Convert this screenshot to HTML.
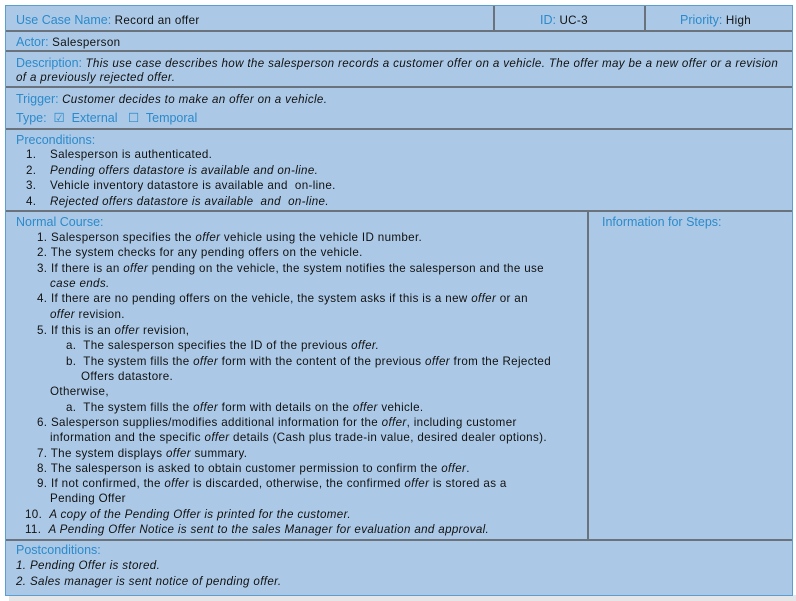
<!DOCTYPE html>
<html><head><meta charset="utf-8"><style>
*{margin:0;padding:0;box-sizing:border-box}
body{width:796px;height:601px;background:#fff;position:relative;overflow:hidden;font-family:"Liberation Sans",sans-serif}
.shadow{position:absolute;left:9px;top:595px;width:787px;height:6px;background:#e4e6e8}
.box{position:absolute;left:5px;top:5px;width:788px;height:591px;background:#abc9e6;border:1px solid #5a9fd0}
.h{position:absolute;height:2px;background:#6a737c}
.v{position:absolute;width:2px;background:#6a737c}
.t{position:absolute;white-space:nowrap;font-size:11.6px;letter-spacing:0.35px;color:#111;line-height:14px}
.l{color:#2b8acb;font-size:12.5px;font-style:normal;letter-spacing:0}
i{font-style:italic}
</style></head><body>
<div class="shadow"></div>
<div class="box"></div>
<div class="h" style="left:6px;top:30px;width:786px"></div>
<div class="v" style="left:493px;top:6px;height:25px"></div>
<div class="v" style="left:644px;top:6px;height:25px"></div>
<div class="h" style="left:6px;top:50px;width:786px"></div>
<div class="h" style="left:6px;top:86px;width:786px"></div>
<div class="h" style="left:6px;top:128px;width:786px"></div>
<div class="h" style="left:6px;top:210px;width:786px"></div>
<div class="v" style="left:587px;top:211px;height:329px"></div>
<div class="h" style="left:6px;top:539px;width:786px"></div>

<div class="t" style="left:16px;top:13px"><span class="l">Use Case Name: </span>Record an offer</div>
<div class="t" style="left:540px;top:13px"><span class="l">ID: </span>UC-3</div>
<div class="t" style="left:680px;top:13px"><span class="l">Priority: </span>High</div>
<div class="t" style="left:16px;top:35px"><span class="l">Actor: </span>Salesperson</div>
<div class="t" style="left:16px;top:56px"><span class="l">Description: </span><i>This use case describes how the salesperson records a customer offer on a vehicle. The offer may be a new offer or a revision</i></div>
<div class="t" style="left:16px;top:71px"><i>of a previously rejected offer.</i></div>
<div class="t" style="left:16px;top:92px"><span class="l">Trigger: </span><i>Customer decides to make an offer on a vehicle.</i></div>
<div class="t" style="left:16px;top:111px"><span class="l">Type:&nbsp; ☑&nbsp; External&nbsp;&nbsp; ☐&nbsp; Temporal</span></div>
<div class="t" style="left:16px;top:133px"><span class="l">Preconditions:</span></div>
<div class="t" style="left:26px;top:148px">1.</div><div class="t" style="left:50px;top:148px">Salesperson is authenticated.</div>
<div class="t" style="left:26px;top:164px">2.</div><div class="t" style="left:50px;top:164px"><i>Pending offers datastore is available and on-line.</i></div>
<div class="t" style="left:26px;top:179px">3.</div><div class="t" style="left:50px;top:179px">Vehicle inventory datastore is available and&nbsp; on-line.</div>
<div class="t" style="left:26px;top:195px">4.</div><div class="t" style="left:50px;top:195px"><i>Rejected offers datastore is available&nbsp; and&nbsp; on-line.</i></div>

<div class="t" style="left:16px;top:215px"><span class="l">Normal Course:</span></div>
<div class="t" style="left:602px;top:215px"><span class="l">Information for Steps:</span></div>

<div class="t" style="left:37px;top:231px">1. Salesperson specifies the <i>offer</i> vehicle using the vehicle ID number.</div>
<div class="t" style="left:37px;top:246px">2. The system checks for any pending offers on the vehicle.</div>
<div class="t" style="left:37px;top:262px">3. If there is an <i>offer</i> pending on the vehicle, the system notifies the salesperson and the use</div>
<div class="t" style="left:50px;top:277px"><i>case ends.</i></div>
<div class="t" style="left:37px;top:292px">4. If there are no pending offers on the vehicle, the system asks if this is a new <i>offer</i> or an</div>
<div class="t" style="left:50px;top:308px"><i>offer</i> revision.</div>
<div class="t" style="left:37px;top:324px">5. If this is an <i>offer</i> revision,</div>
<div class="t" style="left:66px;top:339px">a.&nbsp; The salesperson specifies the ID of the previous <i>offer.</i></div>
<div class="t" style="left:66px;top:355px">b.&nbsp; The system fills the <i>offer</i> form with the content of the previous <i>offer</i> from the Rejected</div>
<div class="t" style="left:81px;top:370px">Offers datastore.</div>
<div class="t" style="left:50px;top:385px">Otherwise,</div>
<div class="t" style="left:66px;top:401px">a.&nbsp; The system fills the <i>offer</i> form with details on the <i>offer</i> vehicle.</div>
<div class="t" style="left:37px;top:416px">6. Salesperson supplies/modifies additional information for the <i>offer</i>, including customer</div>
<div class="t" style="left:50px;top:431px">information and the specific <i>offer</i> details (Cash plus trade-in value, desired dealer options).</div>
<div class="t" style="left:37px;top:447px">7. The system displays <i>offer</i> summary.</div>
<div class="t" style="left:37px;top:462px">8. The salesperson is asked to obtain customer permission to confirm the <i>offer</i>.</div>
<div class="t" style="left:37px;top:477px">9. If not confirmed, the <i>offer</i> is discarded, otherwise, the confirmed <i>offer</i> is stored as a</div>
<div class="t" style="left:50px;top:492px">Pending Offer</div>
<div class="t" style="left:25px;top:508px">10.&nbsp; <i>A copy of the Pending Offer is printed for the customer.</i></div>
<div class="t" style="left:25px;top:523px">11.&nbsp; <i>A Pending Offer Notice is sent to the sales Manager for evaluation and approval.</i></div>

<div class="t" style="left:16px;top:543px"><span class="l">Postconditions:</span></div>
<div class="t" style="left:16px;top:559px"><i>1. Pending Offer is stored.</i></div>
<div class="t" style="left:16px;top:575px"><i>2. Sales manager is sent notice of pending offer.</i></div>
</body></html>
